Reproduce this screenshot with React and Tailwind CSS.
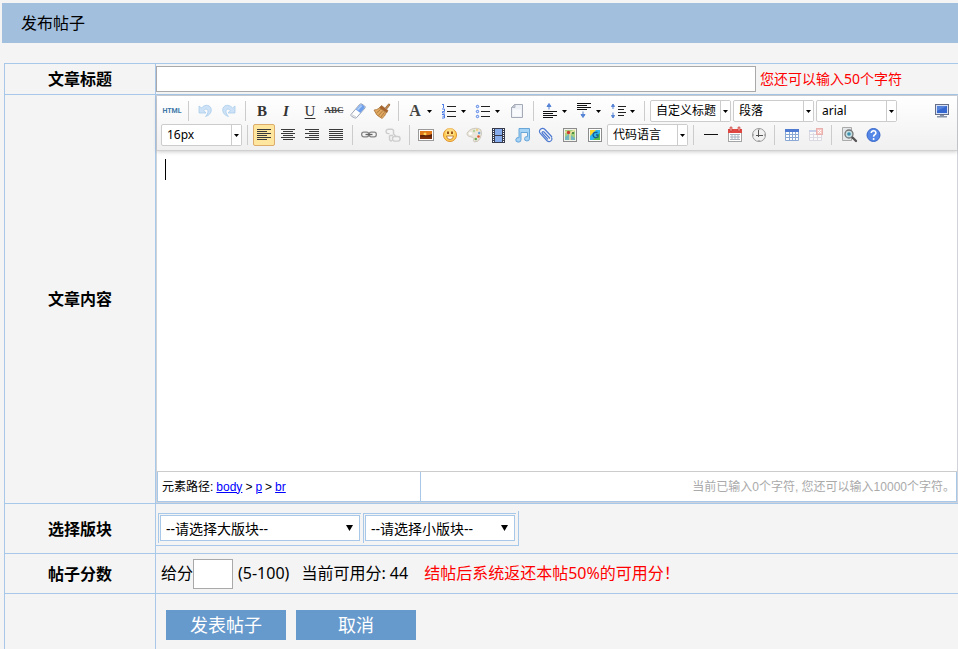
import React from "react";

const INK = "#3a3a3a";

function Svg({ children }) {
  return (
    <svg width="20" height="20" viewBox="0 0 20 20" className="block shrink-0" aria-hidden="true">
      {children}
    </svg>
  );
}

function Lines({ rows, color = INK }) {
  return rows.map(([x, y, w]) => <rect key={y} x={x} y={y} width={w} height="1" fill={color} />);
}

const ArrowShape = () => (
  <path d="M4 5v7h7L8.800 9.500c1.200-2 4.200-1.800 4.200.8 0 2-1 3.500-2.500 5.200 3.600-1 5.800-3.500 5.800-6.500 0-5-6.300-6.500-9.800-2z" fill="#cde2f6" stroke="#abcdec" strokeWidth=".8" strokeLinejoin="round" />
);
const Undo = () => <Svg><ArrowShape /></Svg>;
const Redo = () => (
  <Svg>
    <g transform="translate(20 0) scale(-1 1)"><ArrowShape /></g>
  </Svg>
);
const Eraser = () => (
  <Svg>
    <path d="M3 13.500 11.500 3.500q1-1 2.200-.5l3 2q1 .8.300 2L8.700 16.500q-.8.900-2 .4l-3-1.500q-1.100-.8-.7-1.900z" fill="#fff" stroke="#8f98a8" strokeWidth=".9" />
    <path d="M7.800 8.500 12 3.800q1-.8 2-.2l2.300 1.600q.8.700.1 1.700l-4 5z" fill="#6d9fec" />
    <path d="m8.800 8.200 4-4.300 1.500 1-4 4.500z" fill="#abcbf8" />
    <path d="m4 13.800 4 2.200" stroke="#c8ccd3" />
  </Svg>
);
const Broom = () => (
  <Svg>
    <path d="m13.500 6.500 3.300-3.700 1.200 1-3 4z" fill="#c28a4d" stroke="#8a5424" strokeWidth=".7" />
    <path d="m9.500 4.500 6.500 5-1.200 2.300-7.500-5z" fill="#a8642c" stroke="#8a5424" strokeWidth=".5" />
    <path d="M7.300 7q-2.500 2-5.300 2 2 6 8 8.500 3-2 4.300-6z" fill="#dfa962" stroke="#a56d33" strokeWidth=".7" />
    <path d="m8.500 8.500-4 3.500M10.500 10l-4 4.500M12.500 11.300 9 16" stroke="#a56d33" strokeWidth=".8" />
  </Svg>
);
const Ordered = () => (
  <Svg>
    <path d="M3 3.500h1.500M4.500 3v4M3 8h2.500v2.500H3.500V12H6M3 13.500h2.500V17H3M3.500 15.200h2" fill="none" stroke="#4f7fe6" />
    <Lines rows={[[8, 5, 9], [8, 10, 9], [8, 15, 9]]} color="#222" />
  </Svg>
);
const Unordered = () => (
  <Svg>
    {[5, 10, 15].map((y) => <circle key={y} cx="4.500" cy={y + 0.5} r="1.200" fill="#dfeaff" stroke="#4f7fe6" />)}
    <Lines rows={[[8, 5, 9], [8, 10, 9], [8, 15, 9]]} color="#222" />
  </Svg>
);
const Page = () => (
  <Svg>
    <path d="M7.500 3.500h8v13h-11v-10z" fill="#eef2f7" stroke="#a4abb6" />
    <path d="M4.500 6.500h3.500V3.500z" fill="#c9d1dc" stroke="#a4abb6" strokeWidth=".8" />
    <path d="M6 8.500h8V15H6z" fill="#f8fafc" />
  </Svg>
);
const SpaceTop = () => (
  <Svg>
    <path d="M9 8.500V4M7 5.500 9 2.500l2 3z" fill="#5f8ddb" stroke="#5582d4" />
    <Lines rows={[[3, 10, 14], [3, 12, 10], [3, 14, 14], [3, 16, 10]]} color="#111" />
  </Svg>
);
const SpaceBottom = () => (
  <Svg>
    <Lines rows={[[3, 2, 14], [3, 4, 10], [3, 6, 14], [3, 8, 10]]} color="#111" />
    <path d="M9 10.500v5M7 13.500 9 16.500l2-3z" fill="#5f8ddb" stroke="#5582d4" />
  </Svg>
);
const LineHeight = () => (
  <Svg>
    <path d="M5 8V4M3.500 5.500 5 3l1.500 2.500zM5 11.500v4M3.500 14.500 5 17l1.500-2.500z" fill="#5f8ddb" stroke="#5582d4" />
    <Lines rows={[[10, 5, 8], [10, 8, 6], [10, 11, 8], [10, 14, 6]]} color="#222" />
  </Svg>
);
const Monitor = () => (
  <Svg>
    <rect x="3.500" y="3.500" width="13" height="10" fill="#d7e2f6" stroke="#666f86" />
    <rect x="5" y="5" width="10" height="7" fill="#3567cf" />
    <path d="M5 5h10L5 10z" fill="#5583dc" />
    <path d="M8 14h4v1h3v1.500H5V15h3z" fill="#8a94a8" />
  </Svg>
);
function Align({ type }) {
  const rows = [4, 6, 8, 10, 12, 14].map((y, i) => {
    const w = type === "justify" || i % 2 === 0 ? 14 : 10;
    const x = type === "right" ? 17 - w : type === "center" ? 10 - w / 2 : 3;
    return [x, y, w];
  });
  return <Svg><Lines rows={rows} /></Svg>;
}
const Link = () => (
  <Svg>
    <g fill="none" stroke="#858585" strokeWidth="1.300">
      <rect x="2.700" y="7.200" width="7" height="4.600" rx="2" />
      <rect x="10.300" y="7.200" width="7" height="4.600" rx="2" />
      <path d="M6.500 9.500h7" stroke="#666" />
    </g>
  </Svg>
);
const Unlink = () => (
  <Svg>
    <g fill="none" stroke="#cdcdcd" strokeWidth="1.400">
      <path d="M9 4.200h-4q-2 .3-2 2.200t2 2.200h1.500M9 4.200q2 .6 1.500 2.800" />
      <path d="M6.500 10.500v4q.3 1.500 2.500 1.500M6.500 10.500H10" />
      <rect x="9.500" y="11.500" width="7.500" height="4.600" rx="2" />
      <path d="M10.500 7v2l2.500 2.500" />
    </g>
  </Svg>
);
const Picture = () => (
  <Svg>
    <rect x="2.500" y="4.500" width="15" height="11" fill="#fff" stroke="#9a9a9a" />
    <rect x="4" y="6" width="12" height="8" fill="#7d2f0c" />
    <rect x="4" y="6" width="12" height="4" fill="#e07a1c" />
    <circle cx="9" cy="9" r="1.500" fill="#ffd75a" />
    <path d="M4 10.500 8 10l3 1 5-2v2.500H4z" fill="#54210c" />
  </Svg>
);
const Smile = () => (
  <Svg>
    <circle cx="10" cy="10" r="6.500" fill="#ffcf57" stroke="#df9029" />
    <circle cx="10" cy="7.500" r="4.500" fill="#ffe69c" opacity=".6" />
    <rect x="7" y="6.500" width="2" height="2.500" fill="#9a5518" />
    <rect x="11" y="6.500" width="2" height="2.500" fill="#9a5518" />
    <path d="M6.500 11h7q-.5 3.500-3.500 3.500T6.500 11z" fill="#fff" stroke="#b86c1c" strokeWidth=".8" />
  </Svg>
);
const Palette = () => (
  <Svg>
    <path d="M3 8.500C5 3.500 13 1.500 17 5q1.500 4-1 8.500-2 4-5.500 3.300c-2.500-.8.500-3-1.500-4.300C7 11.500 3 12 3 8.500z" fill="#ebe6dc" stroke="#c3bcae" strokeWidth=".8" />
    <ellipse cx="6.500" cy="8.500" rx="1.800" ry="1.200" fill="#fff" />
    <circle cx="10" cy="6" r="1.200" fill="#b4d39c" /><circle cx="13" cy="5" r="1.200" fill="#efd389" />
    <circle cx="15.200" cy="8" r="1.200" fill="#65a3d9" /><circle cx="14.500" cy="11.500" r="1.300" fill="#e0562f" /><circle cx="11.800" cy="14" r="1.300" fill="#6cab52" />
  </Svg>
);
const Film = () => (
  <Svg>
    <rect x="4" y="3" width="13" height="15" fill="#353b4c" />
    <rect x="7" y="4" width="7" height="6" fill="#86abed" /><rect x="7" y="11" width="7" height="6" fill="#86abed" />
    {[4, 6, 8, 10, 12, 14, 16].map((y) => <path key={y} d={`M5 ${y}h1v1h-1zM15 ${y}h1v1h-1z`} fill="#fff" />)}
  </Svg>
);
const Music = () => (
  <Svg>
    <path d="M7 3.500h10.500v10.300a2.500 2.200 0 1 1-2-2.200V7.500H9v7.300a2.600 2.300 0 1 1-2-2.200z" fill="#a5d3f5" stroke="#5d9fd6" strokeWidth=".9" />
  </Svg>
);
const Clip = () => (
  <Svg>
    <path d="m16 12-7-7.500c-1.500-1.500-3-1.500-4.500-.2s-1.300 3 0 4.400l6.500 7c2.500 2.300 6.500-.7 4.300-3.500M14 13.500 8 7C6.500 6 5.500 7.500 6.500 8.500l5.500 5.800" fill="none" stroke="#4f7ad2" strokeWidth="1.200" />
  </Svg>
);
const MapIcon = () => (
  <Svg>
    <rect x="3.500" y="3.500" width="13" height="13" fill="#f3f3ee" stroke="#8c8c8c" />
    <path d="M5 5h10v10H5z" fill="#a7cf7e" /><path d="m5 12 4-3 6 4v2H5z" fill="#74b6c0" /><path d="m5 7 5 1 5-3M10 8v7" stroke="#eee3a2" fill="none" strokeWidth="1.500" />
    <circle cx="8.500" cy="7.500" r="1.700" fill="#d0392f" /><circle cx="13" cy="8" r="1" fill="#317934" />
  </Svg>
);
const GMap = () => (
  <Svg>
    <rect x="4.500" y="3.500" width="13" height="13" fill="#fff" stroke="#8c8c8c" />
    <path d="M6 5h10v10H6z" fill="#32b6ea" /><path d="M6 5h6l-6 6z" fill="#ffd52e" /><path d="m16 8-7 7h7z" fill="#55be48" />
    <path d="M13.500 7.500q-4-1-4.500 2.500 1 4 5 2v-2h-2" fill="none" stroke="#145c99" strokeWidth="1.300" />
  </Svg>
);
const Rule = () => <Svg><Lines rows={[[4, 9, 14]]} color="#111" /></Svg>;
const Calendar = () => (
  <Svg>
    <rect x="4.500" y="4.500" width="13" height="12" fill="#fff" stroke="#a4a4a4" />
    <path d="M4 4h14v4H4z" fill="#e04843" /><path d="M6 2h2v4H6zM14 2h2v4h-2z" fill="#f4a19b" stroke="#b82220" strokeWidth=".5" />
    <path d="M6 9.500h10M6 12h10M6 14.500h10M8 9v6M11 9v6M14 9v6" stroke="#aab5c0" />
  </Svg>
);
const Clock = () => (
  <Svg>
    <circle cx="11" cy="10" r="6.500" fill="#f1f1f1" stroke="#999" />
    <path d="M10.500 5v5.500H15M8 10.500h3M10.500 8v4" fill="none" stroke="#555" /><path d="M11 4v1M11 15v1M5 10h1M16 10h1" stroke="#888" />
  </Svg>
);
const TableIcon = () => (
  <Svg>
    <path d="M4.500 4.500h13v11h-13zM4.500 9.500h13M4.500 12.500h13M8.500 7v8.500M11.500 7v8.500M14.500 7v8.500" fill="#fff" stroke="#8aa8d4" />
    <path d="M4 4h14v3H4z" fill="#4f7ad2" />
  </Svg>
);
const TableDelete = () => (
  <Svg>
    <path d="M4.500 5.500h12v10h-12zM4.500 9.500h12M4.500 12.500h12M8.500 8v7.500M12.500 8v7.500" fill="#fafafa" stroke="#dbd9e2" />
    <path d="M4 5h8v2H4z" fill="#c6d1e9" /><rect x="11.500" y="3.500" width="6" height="6" fill="#f6c8c4" stroke="#e9b0ad" /><path d="m13 5 3 3m0-3-3 3" stroke="#fff" />
  </Svg>
);
const Preview = () => (
  <Svg>
    <path d="M4.500 2.500h9v13h-9z" fill="#e5e8ea" stroke="#aaa" />
    <circle cx="11" cy="9" r="4" fill="#c4dfe4" stroke="#757575" strokeWidth="1.300" /><circle cx="11" cy="9" r="1.800" fill="#3d8fae" />
    <path d="m14.500 12.500 3.500 3.500" stroke="#555" strokeWidth="2.400" strokeLinecap="round" />
  </Svg>
);
const Help = () => (
  <Svg>
    <circle cx="11.500" cy="10" r="6.500" fill="#5587e8" stroke="#3565c8" />
    <path d="M9.200 8q.3-2.200 2.400-2.200T13.900 8q0 1-1.200 1.700T11.600 11.700" fill="none" stroke="#fff" strokeWidth="1.600" /><circle cx="11.600" cy="14" r="1" fill="#fff" />
  </Svg>
);

function Tool({ label, active, children }) {
  return (
    <button
      type="button"
      title={label}
      aria-label={label}
      className={
        "mx-px flex h-[22px] w-[22px] shrink-0 items-center justify-center border " +
        (active ? "rounded-xs border-[#dcac6c] bg-[#ffe69f]" : "border-transparent")
      }
    >
      {children}
    </button>
  );
}

function Caret() {
  return (
    <svg width="5" height="3" viewBox="0 0 5 3" className="block shrink-0" aria-hidden="true">
      <path d="M0 0h5L2.500 3z" fill="#000" />
    </svg>
  );
}

function SplitTool({ label, children }) {
  return (
    <div className="flex w-[34px] shrink-0 items-center">
      <Tool label={label}>{children}</Tool>
      <button type="button" aria-label={label + "选项"} className="flex h-5 w-2 items-center justify-start">
        <Caret />
      </button>
    </div>
  );
}

function Sep() {
  return <span className="mx-1 h-5 w-px shrink-0 bg-[#ccc]" />;
}

function Combo({ label, value }) {
  return (
    <div className="relative mx-px h-[22px] w-[81px] shrink-0">
      <select
        aria-label={label}
        className="block h-full w-full appearance-none rounded-xs border border-[#ccc] bg-white pl-[5px] pr-2.5 text-xs text-black"
      >
        <option>{value}</option>
      </select>
      <span className="pointer-events-none absolute inset-y-px right-px flex w-2.5 items-center justify-center border-l border-[#ccc] bg-white">
        <Caret />
      </span>
    </div>
  );
}

function Toolbar() {
  return (
    <div className="relative border-b border-[#d0d0d0] bg-linear-to-b from-white to-[#f0f0f0] px-[3px] pb-[3px] pt-[3px] shadow-[0_1px_4px_rgba(0,0,0,0.2)]">
      <div className="flex h-6 items-center">
        <Tool label="源代码"><span className="font-[Roboto,sans-serif] text-[7px] font-bold text-[#3d77a8]">HTML</span></Tool>
        <Sep />
        <Tool label="撤销"><Undo /></Tool>
        <Tool label="重做"><Redo /></Tool>
        <Sep />
        <Tool label="加粗"><span className="font-[Liberation_Serif,serif] text-[15px] font-bold text-[#333]">B</span></Tool>
        <Tool label="斜体"><span className="font-[Liberation_Serif,serif] text-[15px] font-bold italic text-[#333]">I</span></Tool>
        <Tool label="下划线"><span className="font-[Liberation_Serif,serif] text-[15px] text-[#333] underline underline-offset-2">U</span></Tool>
        <Tool label="删除线"><span className="font-[Liberation_Serif,serif] text-[9px] font-bold text-[#444] line-through">ABC</span></Tool>
        <Tool label="清除格式"><Eraser /></Tool>
        <Tool label="格式刷"><Broom /></Tool>
        <Sep />
        <SplitTool label="字体颜色"><span className="font-[Liberation_Serif,serif] text-base font-bold text-[#444]">A</span></SplitTool>
        <SplitTool label="有序列表"><Ordered /></SplitTool>
        <SplitTool label="无序列表"><Unordered /></SplitTool>
        <Tool label="清空文档"><Page /></Tool>
        <Sep />
        <SplitTool label="段前距"><SpaceTop /></SplitTool>
        <SplitTool label="段后距"><SpaceBottom /></SplitTool>
        <SplitTool label="行间距"><LineHeight /></SplitTool>
        <Sep />
        <Combo label="自定义标题" value="自定义标题" />
        <Combo label="段落格式" value="段落" />
        <Combo label="字体" value="arial" />
        <div className="ml-auto"><Tool label="全屏"><Monitor /></Tool></div>
      </div>
      <div className="flex h-6 items-center">
        <Combo label="字号" value="16px" />
        <Sep />
        <Tool label="居左对齐" active><Align type="left" /></Tool>
        <Tool label="居中对齐"><Align type="center" /></Tool>
        <Tool label="居右对齐"><Align type="right" /></Tool>
        <Tool label="两端对齐"><Align type="justify" /></Tool>
        <Sep />
        <Tool label="超链接"><Link /></Tool>
        <Tool label="取消链接"><Unlink /></Tool>
        <Sep />
        <Tool label="图片"><Picture /></Tool>
        <Tool label="表情"><Smile /></Tool>
        <Tool label="涂鸦"><Palette /></Tool>
        <Tool label="视频"><Film /></Tool>
        <Tool label="音乐"><Music /></Tool>
        <Tool label="附件"><Clip /></Tool>
        <Tool label="地图"><MapIcon /></Tool>
        <Tool label="谷歌地图"><GMap /></Tool>
        <Combo label="代码语言" value="代码语言" />
        <Sep />
        <Tool label="分隔线"><Rule /></Tool>
        <Tool label="日期"><Calendar /></Tool>
        <Tool label="时间"><Clock /></Tool>
        <Sep />
        <Tool label="插入表格"><TableIcon /></Tool>
        <Tool label="删除表格"><TableDelete /></Tool>
        <Sep />
        <Tool label="预览"><Preview /></Tool>
        <Tool label="帮助"><Help /></Tool>
      </div>
    </div>
  );
}

function Editor() {
  return (
    <div className="w-full border border-[#d0d4da] bg-white">
      <Toolbar />
      <div role="textbox" aria-multiline="true" aria-labelledby="content-label" tabIndex={0} className="min-h-80 px-2 py-2 outline-none">
        <span className="block h-[21px] w-px bg-black" />
      </div>
      <div className="border-t border-[#ccc] font-[Liberation_Sans,Noto_Sans_CJK_SC,sans-serif] text-xs">
        <div className="flex h-[30px] border-x border-b border-[#a8c8ea]">
          <div className="flex w-[33%] items-center gap-[3px] border-r border-[#a8c8ea] pl-1">
            <span>元素路径:</span>
            <a href="#body" className="text-[#00f] underline">body</a>
            <span>&gt;</span>
            <a href="#p" className="text-[#00f] underline">p</a>
            <span>&gt;</span>
            <a href="#br" className="text-[#00f] underline">br</a>
          </div>
          <div className="flex flex-1 items-center justify-end pr-px text-[#aaa]">当前已输入0个字符, 您还可以输入10000个字符。</div>
        </div>
      </div>
    </div>
  );
}

function Row({ label, htmlFor, labelId, grow, children }) {
  return (
    <div className={"flex border-t border-[#a8c8ea] " + (grow ? "flex-1" : "")}>
      <div className="flex w-[151px] shrink-0 items-center justify-center border-r border-[#a8c8ea]">
        {label && <label id={labelId} htmlFor={htmlFor} className="font-bold">{label}</label>}
      </div>
      <div className="min-w-0 flex-1">{children}</div>
    </div>
  );
}

function BoardSelect({ id, label, value, width }) {
  return (
    <div className="border-l border-t border-[#a8c8ea] px-px pb-0.5 pt-px">
      <div className={"relative " + width}>
        <select id={id} aria-label={label} className="block h-[26px] w-full appearance-none border border-[#a8c8ea] bg-white pl-[5px] pt-0.5 text-sm leading-5 text-black">
          <option>{value}</option>
        </select>
        <svg width="7" height="6" viewBox="0 0 7 6" className="pointer-events-none absolute right-[7px] top-2.5" aria-hidden="true">
          <path d="M0 0h7L3.500 6z" fill="#000" />
        </svg>
      </div>
    </div>
  );
}

export default function App() {
  return (
    <div className="flex min-h-screen flex-col bg-[#f4f4f4] pl-0.5 pt-[3px] font-[Noto_Sans,Noto_Sans_CJK_SC,sans-serif] text-base text-black">
      <header className="flex h-10 items-center bg-[#a2bfde] pl-[19px]">
        <h1>发布帖子</h1>
      </header>
      <form className="ml-0.5 mt-5 flex flex-1 flex-col border-l border-[#a8c8ea]">
        <Row label="文章标题" htmlFor="title">
          <div className="flex h-[30px] items-center gap-1">
            <input id="title" type="text" className="h-[26px] w-[600px] border border-[#a9a9a9] bg-white px-1" />
            <span className="text-sm text-[#f00]">您还可以输入50个字符</span>
          </div>
        </Row>
        <Row label="文章内容" labelId="content-label">
          <Editor />
        </Row>
        <Row label="选择版块" htmlFor="board">
          <div className="flex pb-[7px] pt-[7px]">
            <div className="flex gap-0.5 border-b border-r border-[#a8c8ea] pb-0.5 pl-0.5 pr-0.5 pt-0.5">
              <BoardSelect id="board" label="大版块" value="--请选择大版块--" width="w-[200px]" />
              <BoardSelect id="sub-board" label="小版块" value="--请选择小版块--" width="w-[150px]" />
            </div>
          </div>
        </Row>
        <Row label="帖子分数" htmlFor="score">
          <div className="flex h-[39px] items-start pl-[5px] pt-[5px] leading-7">
            <span>给分</span>
            <input id="score" type="text" className="h-[30px] w-10 border border-[#a9a9a9] bg-white px-1" />
            <span className="ml-[5px]">(5-100)</span>
            <span className="ml-3">当前可用分: 44</span>
            <span className="ml-4 text-[#f00]">结帖后系统返还本帖50%的可用分！</span>
          </div>
        </Row>
        <Row grow>
          <div className="flex gap-2.5 pl-2.5 pt-4">
            <button type="submit" className="h-[30px] w-[120px] bg-[#69c] text-lg leading-[30px] text-white">发表帖子</button>
            <button type="button" className="h-[30px] w-[120px] bg-[#69c] text-lg leading-[30px] text-white">取消</button>
          </div>
        </Row>
      </form>
    </div>
  );
}
